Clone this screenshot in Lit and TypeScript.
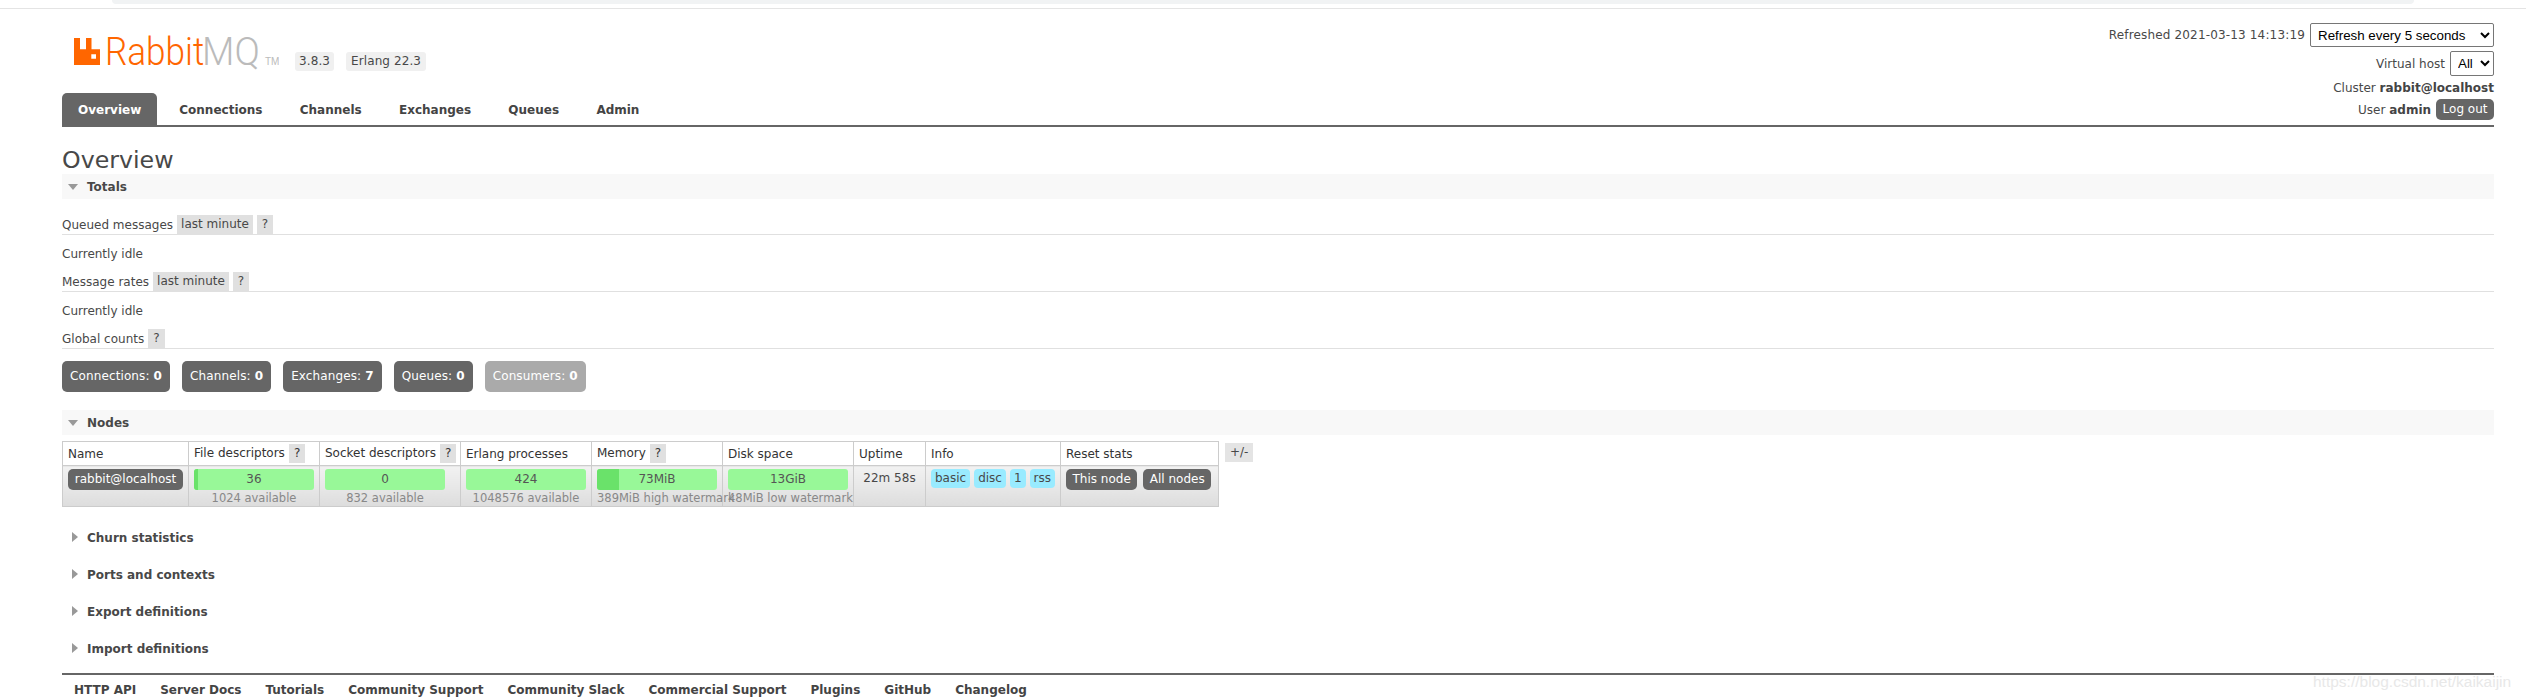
import { LitElement, html, css } from "lit";
import { customElement } from "lit/decorators.js";

const tabs = ["Overview", "Connections", "Channels", "Exchanges", "Queues", "Admin"];
const counts: [string, string, boolean][] = [
  ["Connections:", "0", false],
  ["Channels:", "0", false],
  ["Exchanges:", "7", false],
  ["Queues:", "0", false],
  ["Consumers:", "0", true],
];
const footer = ["HTTP API", "Server Docs", "Tutorials", "Community Support", "Community Slack", "Commercial Support", "Plugins", "GitHub", "Changelog"];
const collapsed = ["Churn statistics", "Ports and contexts", "Export definitions", "Import definitions"];

@customElement("app-root")
export class AppRoot extends LitElement {
  static styles = css`
    :host {
      display: block;
      position: relative;
      height: 699px;
      overflow: hidden;
      background: #fff;
      color: #484848;
      font: 12px "DejaVu Sans", Verdana, sans-serif;
    }
    * { box-sizing: border-box; }
    .chrome { height: 9px; border-bottom: 1px solid #e4e4e4; padding: 0 112px; }
    .chrome div { height: 4px; background: #f1f3f4; border-radius: 0 0 6px 6px; }
    .page { padding: 0 32px 0 62px; }
    header { display: flex; justify-content: space-between; height: 118px; border-bottom: 2px solid #666; }
    .left { display: flex; flex-direction: column; }
    .brand { display: flex; height: 84px; padding: 13px 0 0 12px; }
    .brand svg { display: block; flex: none; }
    .badge { height: 19px; margin: 30px 0 0 0; padding: 0 5px; line-height: 19px; background: #f0f0f0; border-radius: 3px; letter-spacing: .1px; }
    .badge.first { margin-left: 16px; margin-right: 12px; padding: 0 4px; }
    nav { display: flex; }
    nav a { height: 32px; line-height: 34px; padding: 0 16px; margin-right: 5.300px; font-weight: bold; color: #444; }
    nav a.on { background: #666; color: #fff; border-radius: 5px 5px 0 0; margin-right: 6px; }
    .login { display: flex; flex-direction: column; align-items: flex-end; padding-top: 14px; }
    .login .row { display: flex; align-items: center; justify-content: flex-end; gap: 5px; }
    .stamp { letter-spacing: .16px; }
    select { font: 13.33px "Liberation Sans", Arial, sans-serif; color: #000; background: #fff; border: 1px solid #767676; border-radius: 2px; padding: 0; }
    .sel-refresh { width: 184px; height: 24px; padding-left: 3px; }
    .sel-vhost { width: 44px; height: 25px; padding-left: 3px; }
    .r1 { height: 24px; margin-bottom: 4px; }
    .r2 { height: 25px; }
    .r3 { height: 23px; }
    .r4 { height: 21px; }
    .login b { color: #444; }
    .logout { height: 21px; line-height: 21px; padding: 0 6.500px; background: #666; color: #fff; border-radius: 5px; }
    h1 { margin: 21px 0 0; height: 24px; line-height: 25px; font-size: 23.7px; font-weight: normal; color: #484848; }
    .band { display: flex; align-items: center; height: 25px; margin-top: 2px; padding-left: 25px; background: #f8f8f8; font-weight: bold; position: relative; }
    .band::before { content: ""; position: absolute; left: 6px; top: 10px; border-style: solid; border-width: 6px 5px 0; border-color: #999 transparent transparent; }
    .band.nodes { margin-top: 18px; }
    .sub { display: flex; align-items: center; height: 20px; border-bottom: 1px solid #e0e0e0; gap: 4px; }
    .tag { height: 19px; line-height: 19px; padding: 0 4px; background: #e0e0e0; }
    .tag.help { padding: 0 5px; }
    .first-sub { margin-top: 16px; }
    .idle { display: flex; align-items: center; height: 37px; padding-top: 1px; }
    .counts { display: flex; gap: 12px; margin-top: 12px; }
    .counts span { height: 31px; line-height: 31px; padding: 0 8px; background: #666; color: #fff; border-radius: 5px; letter-spacing: .12px; }
    .counts span.off { background: #aaa; }
    .nodes-wrap { display: flex; align-items: flex-start; gap: 6px; margin-top: 6px; }
    table { border-collapse: collapse; table-layout: fixed; width: 1156px; height: 66px; }
    th, td { border: 1px solid #ccc; padding: 0 5px; text-align: left; vertical-align: top; font-weight: normal; }
    th { height: 24px; white-space: nowrap; color: #333; background: #fff; vertical-align: middle; }
    th .tag { display: inline-block; padding: 0 5px; margin-left: 4px; }
    td { background: linear-gradient(#f2f2f2, #ddd); padding-top: 3px; height: 41px; }
    .pill { display: block; height: 21px; line-height: 21px; border-radius: 5px; background: #666; color: #fff; text-align: center; }
    .bar { position: relative; height: 21px; line-height: 21px; width: 120px; border-radius: 3px; background: #98f898; text-align: center; color: #555; overflow: hidden; }
    .bar i { position: absolute; left: 0; top: 0; bottom: 0; background: #6ae26a; }
    .bar span { position: relative; }
    .avail { width: 120px; height: 15px; line-height: 16px; text-align: center; white-space: nowrap; color: #888; font-size: 11.5px; }
    .up { text-align: center; line-height: 19px; }
    .info { display: flex; gap: 4px; }
    .info span { height: 19px; line-height: 19px; padding: 0 4px; background: #99ebff; border-radius: 4px; }
    .reset { display: flex; gap: 6px; }
    .reset span { height: 21px; line-height: 21px; padding: 0 6.500px; background: #666; color: #fff; border-radius: 5px; white-space: nowrap; flex: none; }
    .toggle { height: 19px; line-height: 19px; padding: 0 5px; margin-top: 2px; background: #e4e4e4; }
    .sections { margin-top: 12px; }
    .sec { display: flex; align-items: center; height: 37px; padding-left: 25px; font-weight: bold; position: relative; }
    .sec::before { content: ""; position: absolute; left: 10px; top: 13px; border-style: solid; border-width: 5px 0 5px 6px; border-color: transparent transparent transparent #999; }
    footer { display: flex; margin-top: 6px; height: 26px; border-top: 2px solid #666; padding: 5px 0 0 0; font-weight: bold; color: #444; }
    footer a { padding: 0 12px; line-height: 20px; white-space: nowrap; }
    .mark { position: absolute; left: 2313px; top: 672px; font: 15.5px/20px "Liberation Sans", Arial, sans-serif; color: #e8e8e8; }
  `;

  bar(val: string, avail: string, pct: number) {
    return html`<div class="bar"><i style="width:${pct}px"></i><span>${val}</span></div><div class="avail">${avail}</div>`;
  }

  render() {
    return html`
      <div class="chrome"><div></div></div>
      <div class="page">
        <header>
          <div class="left">
            <div class="brand">
              <svg width="205" height="55" viewBox="0 -15 205 55" aria-label="RabbitMQ">
                <path fill="#f60" fill-rule="evenodd" d="M0 1h6v11.300h6V1h5.500v11.300h8.500V28H0z M17.300 17.300v4.400h4.700v-4.400z"/>
                <text transform="translate(31 28) scale(.9 1)" font-family="Roboto, Liberation Sans" font-weight="300" font-size="39" fill="#f60">Rabbit</text>
                <text transform="translate(128 28) scale(.96 1)" font-family="Roboto, Liberation Sans" font-weight="300" font-size="39" fill="#bbb">MQ</text>
                <text x="191" y="28" font-family="Liberation Sans" font-size="10" fill="#bbb">TM</text>
              </svg>
              <span class="badge first">3.8.3</span>
              <span class="badge">Erlang 22.3</span>
            </div>
            <nav>
              ${tabs.map((t, i) => html`<a class=${i === 0 ? "on" : ""}>${t}</a>`)}
            </nav>
          </div>
          <div class="login">
            <div class="row r1">
              <span class="stamp">Refreshed 2021-03-13 14:13:19</span>
              <select class="sel-refresh"><option>Refresh every 5 seconds</option></select>
            </div>
            <div class="row r2">
              <span>Virtual host</span>
              <select class="sel-vhost"><option>All</option></select>
            </div>
            <div class="row r3"><span>Cluster <b>rabbit@localhost</b></span></div>
            <div class="row r4"><span>User <b>admin</b></span><span class="logout">Log out</span></div>
          </div>
        </header>
        <h1>Overview</h1>
        <div class="band">Totals</div>
        <div class="sub first-sub"><span>Queued messages</span><span class="tag">last minute</span><span class="tag help">?</span></div>
        <div class="idle">Currently idle</div>
        <div class="sub"><span>Message rates</span><span class="tag">last minute</span><span class="tag help">?</span></div>
        <div class="idle">Currently idle</div>
        <div class="sub"><span>Global counts</span><span class="tag help">?</span></div>
        <div class="counts">
          ${counts.map(([l, v, off]) => html`<span class=${off ? "off" : ""}>${l} <b>${v}</b></span>`)}
        </div>
        <div class="band nodes">Nodes</div>
        <div class="nodes-wrap">
          <table>
            <colgroup>
              <col style="width:126px"><col style="width:131px"><col style="width:141px"><col style="width:131px"><col style="width:131px"><col style="width:131px"><col style="width:72px"><col style="width:135px"><col style="width:158px">
            </colgroup>
            <tr>
              <th>Name</th>
              <th>File descriptors<span class="tag">?</span></th>
              <th>Socket descriptors<span class="tag">?</span></th>
              <th>Erlang processes</th>
              <th>Memory<span class="tag">?</span></th>
              <th>Disk space</th>
              <th>Uptime</th>
              <th>Info</th>
              <th>Reset stats</th>
            </tr>
            <tr>
              <td><span class="pill">rabbit@localhost</span></td>
              <td>${this.bar("36", "1024 available", 4)}</td>
              <td>${this.bar("0", "832 available", 0)}</td>
              <td>${this.bar("424", "1048576 available", 0)}</td>
              <td>${this.bar("73MiB", "389MiB high watermark", 22)}</td>
              <td>${this.bar("13GiB", "48MiB low watermark", 0)}</td>
              <td class="up">22m 58s</td>
              <td><div class="info"><span>basic</span><span>disc</span><span>1</span><span>rss</span></div></td>
              <td><div class="reset"><span>This node</span><span>All nodes</span></div></td>
            </tr>
          </table>
          <span class="toggle">+/-</span>
        </div>
        <div class="sections">
          ${collapsed.map((s) => html`<div class="sec">${s}</div>`)}
        </div>
        <footer>${footer.map((f) => html`<a>${f}</a>`)}</footer>
      </div>
      <div class="mark">https://blog.csdn.net/kaikaijin</div>
    `;
  }
}
